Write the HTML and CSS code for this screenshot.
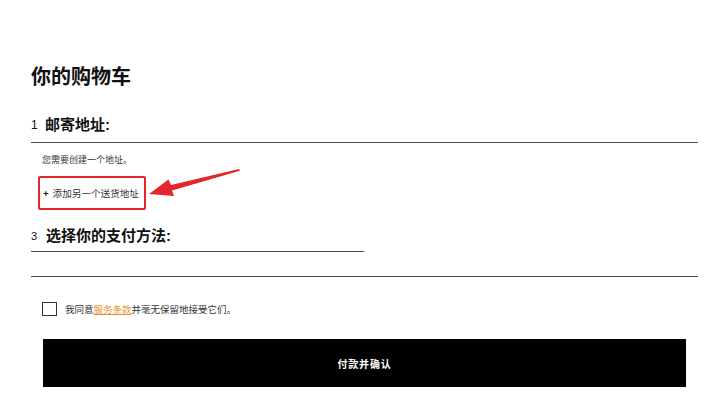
FILE: index.html
```html
<!DOCTYPE html>
<html>
<head>
  <title>你的购物车</title>
  <link rel="stylesheet" href="styles.css">
</head>
<body>
  <div class="page">
    <h1 class="title">你的购物车</h1>

    <div class="step">
      <h2 class="step-head"><span class="step-num">1</span>邮寄地址:</h2>
      <p class="note">您需要创建一个地址。</p>
      <div class="add-box">
        <span class="plus">+</span>添加另一个送货地址
      </div>
    </div>

    <div class="step">
      <h2 class="step-head short"><span class="step-num small">3</span>选择你的支付方法:</h2>
      <div class="divider"></div>
    </div>

    <label class="agree">
      <span class="checkbox"></span>
      <span>我同意<a href="#" class="terms">服务条款</a>并毫无保留地接受它们。</span>
    </label>

    <button class="pay">付款并确认</button>
  </div>

  <svg class="arrow" width="720" height="409" viewBox="0 0 720 409">
    <polygon points="149,194 174,196 172,190.5 240,170.8 239,169 171,185 168.5,179.5" fill="#e3262b"/>
  </svg>
</body>
</html>
```

FILE: styles.css
```css
:root {
  --text: #111;
  --muted: #333;
  --line: #4a4a4a;
  --red: #e3262b;
  --orange: #e8912c;
}

* {
  margin: 0;
  padding: 0;
  box-sizing: border-box;
}

body {
  font-family: "Liberation Sans", "Noto Sans CJK SC", sans-serif;
  color: var(--text);
  background: #fff;
  width: 720px;
  height: 409px;
  overflow: hidden;
  position: relative;
}

.page {
  padding: 65px 22px 0 31px;
}

.title {
  font-size: 20px;
  line-height: 24px;
  font-weight: 700;
}

.step-head {
  margin-top: 26px;
  font-size: 15px;
  line-height: 20px;
  font-weight: 700;
  padding-bottom: 7px;
  border-bottom: 1px solid var(--line);
  display: flex;
  align-items: center;
}

.step-head.short {
  margin-top: 16px;
  width: 333px;
  padding-bottom: 5px;
}

.step-num {
  font-size: 12px;
  font-weight: 400;
  width: 14px;
}

.step-num.small {
  font-size: 11px;
  width: 15px;
}

.note {
  margin: 10px 0 0 11px;
  font-size: 9px;
  line-height: 14px;
  color: var(--muted);
}

.add-box {
  margin: 9px 0 0 7px;
  width: 108px;
  height: 34px;
  border: 2px solid var(--red);
  border-radius: 2px;
  display: flex;
  align-items: center;
  padding-left: 3px;
  font-size: 9.6px;
  color: var(--muted);
  white-space: nowrap;
}

.plus {
  font-weight: 700;
  margin-right: 4px;
  color: #111;
}

.divider {
  margin-top: 24px;
  border-top: 1px solid var(--line);
}

.agree {
  display: flex;
  align-items: center;
  gap: 8px;
  margin: 25px 0 0 11px;
  font-size: 9.5px;
  color: var(--muted);
}

.checkbox {
  width: 15px;
  height: 14px;
  border: 1.5px solid #333;
}

.terms {
  color: var(--orange);
}

.pay {
  display: block;
  margin: 23px 12px 0 12px;
  width: calc(100% - 24px);
  height: 48px;
  background: #000;
  color: #fff;
  border: none;
  font-family: "Liberation Sans", "Noto Sans CJK SC", sans-serif;
  font-size: 10px;
  font-weight: 700;
  letter-spacing: 0.8px;
}

.arrow {
  position: absolute;
  left: 0;
  top: 0;
  pointer-events: none;
}
```
